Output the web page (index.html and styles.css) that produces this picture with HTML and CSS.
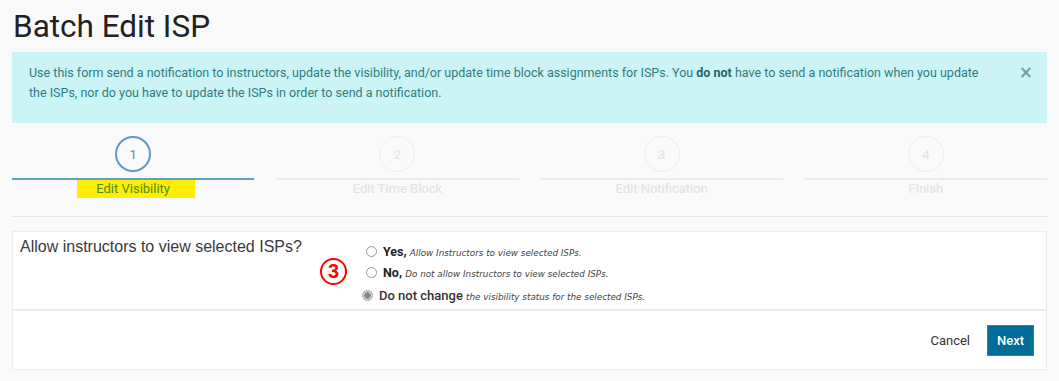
FILE: index.html
```html
<!DOCTYPE html>
<html lang="en">
<head>
    <meta charset="UTF-8">
    <title>Batch Edit ISP</title>
    <link rel="stylesheet" href="styles.css">
</head>
<body>
    <div class="page">
        <h1>Batch Edit ISP</h1>

        <div class="alert">
            <p>Use this form send a notification to instructors, update the visibility, and/or update time block assignments for ISPs. You <b>do not</b> have to send a notification when you update the ISPs, nor do you have to update the ISPs in order to send a notification.</p>
            <button class="alert-close">&times;</button>
        </div>

        <div class="steps">
            <div class="step active">
                <div class="step-num">1</div>
                <div class="step-bar"></div>
                <div class="step-label"><span class="hl">Edit Visibility</span></div>
            </div>
            <div class="step">
                <div class="step-num">2</div>
                <div class="step-bar"></div>
                <div class="step-label">Edit Time Block</div>
            </div>
            <div class="step">
                <div class="step-num">3</div>
                <div class="step-bar"></div>
                <div class="step-label">Edit Notification</div>
            </div>
            <div class="step">
                <div class="step-num">4</div>
                <div class="step-bar"></div>
                <div class="step-label">Finish</div>
            </div>
        </div>

        <div class="card">
            <div class="card-body">
                <div class="question">Allow instructors to view selected ISPs?</div>
                <div class="options">
                    <label class="opt">
                        <input type="radio" name="vis">
                        <span><b>Yes,</b> <i>Allow Instructors to view selected ISPs.</i></span>
                    </label>
                    <label class="opt">
                        <input type="radio" name="vis">
                        <span><b>No,</b> <i>Do not allow Instructors to view selected ISPs.</i></span>
                    </label>
                    <label class="opt opt-default">
                        <input type="radio" name="vis" checked>
                        <span><b>Do not change</b> <i>the visibility status for the selected ISPs.</i></span>
                    </label>
                </div>
                <!-- annotation marker -->
                <span class="marker">3</span>
            </div>
            <div class="card-footer">
                <a class="btn-link" href="#">Cancel</a>
                <button class="btn">Next</button>
            </div>
        </div>
    </div>
</body>
</html>
```

FILE: styles.css
```css
* {
    box-sizing: border-box;
    margin: 0;
    padding: 0;
}

body {
    font-family: Roboto, 'Liberation Sans', sans-serif;
    background-color: #f9f9f9;
    color: #333;
    font-size: 13px;
}

.page {
    padding: 0 12px;
}

h1 {
    font-size: 31.5px;
    font-weight: 400;
    line-height: 38px;
    color: #222;
    margin: 8px 0 6px 1px;
}

.alert {
    display: flex;
    align-items: flex-start;
    background-color: #ccf4f7;
    color: #2f7d80;
    padding: 11px 14px 21px 17px;
    line-height: 19.5px;
    height: 71px;
    font-size: 12.5px;
}

.alert p {
    flex: 1;
    padding-right: 20px;
}

.alert b {
    color: #23676a;
}

.alert-close {
    background: none;
    border: 0;
    font-family: 'DejaVu Sans', sans-serif;
    font-size: 17px;
    font-weight: bold;
    line-height: 19px;
    color: #6aa6a8;
    cursor: pointer;
}

.steps {
    display: grid;
    grid-template-columns: repeat(4, 1fr);
    gap: 22px;
    padding-top: 13px;
    padding-bottom: 18px;
    border-bottom: 1px solid #e6e6e6;
}

.step {
    display: flex;
    flex-direction: column;
    align-items: center;
}

.step-num {
    width: 36px;
    height: 36px;
    border: 1.5px solid #ececec;
    border-radius: 50%;
    display: flex;
    align-items: center;
    justify-content: center;
    color: #e2e2e2;
    font-size: 13px;
}

.step-bar {
    align-self: stretch;
    height: 2px;
    background-color: #eaeaea;
    margin-top: 6px;
}

.step-label {
    height: 18px;
    line-height: 18px;
    color: #e2e2e2;
    font-size: 13px;
}

.step.active .step-num {
    border: 2px solid #5b9dbd;
    color: #5b8ea8;
}

.step.active .step-bar {
    background-color: #5ea2c2;
}

.hl {
    display: inline-block;
    background-color: #ffee00;
    color: #4f8a10;
    padding: 0 25px 0 19px;
    margin-left: 6px;
}

.card {
    margin-top: 14px;
    background-color: #fff;
    border: 1px solid #ebebeb;
}

.card-body {
    position: relative;
    display: flex;
    height: 79px;
    border-bottom: 2px solid #ebebeb;
}

.question {
    width: 344px;
    padding: 6px 0 0 7px;
    font-family: 'Liberation Sans', Arial, sans-serif;
    font-size: 16px;
    color: #3a3a3a;
}

.options {
    display: flex;
    flex-direction: column;
    padding-top: 9px;
}

.opt {
    display: flex;
    align-items: center;
    gap: 6px;
    height: 21px;
    padding-left: 9px;
    color: #222;
    white-space: nowrap;
}

.opt b {
    font-size: 12.5px;
    font-weight: 700;
}

.opt i {
    font-family: 'DejaVu Sans', Verdana, sans-serif;
    font-size: 8.8px;
    color: #444;
}

.opt-default {
    height: 25px;
    padding-left: 5px;
}

.opt-default b {
    font-weight: 500;
    font-size: 13px;
    color: #333;
}

.opt input {
    appearance: none;
    width: 11px;
    height: 11px;
    border: 1px solid #9a9a9a;
    border-radius: 50%;
    background: #fff;
}

.opt input:checked {
    background: radial-gradient(circle, #8a8a8a 0 3px, #d8d8d8 3.5px);
    border-color: #a5a5a5;
}

.marker {
    position: absolute;
    left: 307px;
    top: 26px;
    width: 27px;
    height: 27px;
    border: 2px solid #ff0000;
    border-radius: 50%;
    color: #ff0000;
    font-family: 'Liberation Sans', Arial, sans-serif;
    font-weight: bold;
    font-size: 20px;
    line-height: 23px;
    text-align: center;
}

.card-footer {
    display: flex;
    justify-content: flex-end;
    align-items: center;
    gap: 17px;
    height: 58px;
    padding-right: 12px;
}

.btn-link {
    color: #333;
    text-decoration: none;
    font-size: 13px;
}

.btn {
    background-color: #006c98;
    color: #fff;
    border: 1px solid #3a7fa3;
    font-family: Roboto, sans-serif;
    font-weight: 500;
    font-size: 13px;
    width: 47px;
    height: 31px;
    cursor: pointer;
}
```
